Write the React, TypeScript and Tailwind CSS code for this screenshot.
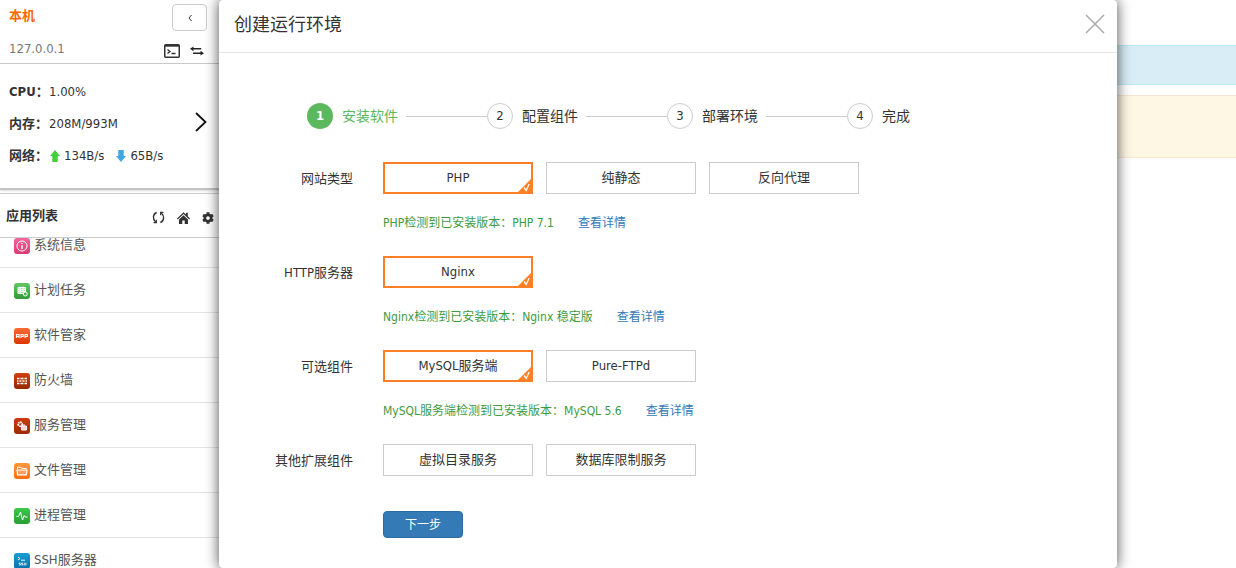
import { useState } from 'react';
import type { ReactNode } from 'react';
import { FaCog } from 'react-icons/fa';

const steps = ['安装软件', '配置组件', '部署环境', '完成'];

const groups = [
  { label: '网站类型', options: ['PHP', '纯静态', '反向代理'], hint: 'PHP检测到已安装版本：PHP 7.1' },
  { label: 'HTTP服务器', options: ['Nginx'], hint: 'Nginx检测到已安装版本：Nginx 稳定版' },
  { label: '可选组件', options: ['MySQL服务端', 'Pure-FTPd'], hint: 'MySQL服务端检测到已安装版本：MySQL 5.6' },
  { label: '其他扩展组件', options: ['虚拟目录服务', '数据库限制服务'], hint: '' },
];

const apps: { name: string; color: string; glyph: ReactNode }[] = [
  {
    name: '系统信息',
    color: 'from-[#f5679b] to-[#d63a72]',
    glyph: (
      <>
        <circle cx="8" cy="8" r="5" />
        <path d="M8 5v1M8 7.2v3.8" strokeWidth="1.4" />
      </>
    ),
  },
  {
    name: '计划任务',
    color: 'from-[#60c763] to-[#2f9c35]',
    glyph: (
      <>
        <path d="M4 4.5h7.5v6H4z" fill="#fff" fillOpacity=".5" />
        <path d="M4 6.5h7.5M4 8.5h7.5M6 3.5v7M9 3.5v5" />
        <circle cx="11.3" cy="11" r="2" fill="#4bb04f" />
      </>
    ),
  },
  {
    name: '软件管家',
    color: 'from-[#ff6a33] to-[#dd3500]',
    glyph: (
      <path
        d="M2.5 10V6.5H5V10M2.5 8.5H5M7 10V6.5h2.2v2H7M11 10V6.5h2.3v2H11"
        strokeWidth="1.1"
      />
    ),
  },
  {
    name: '防火墙',
    color: 'from-[#d33f10] to-[#922a04]',
    glyph: <path d="M3 5.5h2.5M6.5 5.5h3M10.5 5.5H13M3 8h1.5M5.5 8h2M8.5 8h2M11.5 8H13M3 10.5h2.5M6.5 10.5h3M10.5 10.5H13" strokeWidth="1.6" />,
  },
  {
    name: '服务管理',
    color: 'from-[#cf3a10] to-[#9c2b05]',
    glyph: (
      <>
        <circle cx="6.2" cy="6.2" r="2" strokeWidth="1.8" strokeDasharray="1.6 .5" />
        <path d="M7.5 8h5v4h-5zM9 8v4M11 8v4M9 7h2" fill="#fff" fillOpacity=".6" />
      </>
    ),
  },
  {
    name: '文件管理',
    color: 'from-[#ff9838] to-[#ff6c0c]',
    glyph: (
      <>
        <path d="M3.5 6.5V4.2h3.2l1 1.2h4.6v1.1" />
        <path d="M3 7h10l-.6 4.8H3.6z" fill="#fff" fillOpacity=".25" strokeWidth="1.2" />
      </>
    ),
  },
  {
    name: '进程管理',
    color: 'from-[#3cc94a] to-[#2a9f33]',
    glyph: <path d="M2.5 8.5h2L6.5 4l2 8 1.7-4.5 1 1.5h2.3" />,
  },
  {
    name: 'SSH服务器',
    color: 'from-[#12a0d4] to-[#0872aa]',
    glyph: (
      <>
        <path d="M4 4l2 1.5L4 7M7 7.2h4" />
        <path d="M6.5 10H5v1h1.5v1H5M9 10H7.5v1H9v1H7.5M10.3 9.7v2.8M10.3 11h1.7M12 9.7v2.8" strokeWidth=".7" />
      </>
    ),
  },
];

function TerminalIcon() {
  return (
    <svg viewBox="0 0 16 14" className="w-4 h-3.5" fill="none" stroke="#333">
      <rect x=".75" y=".75" width="14.5" height="12.5" rx="1" strokeWidth="1.5" />
      <path d="M1 1.7h14" strokeWidth="2" />
      <path d="M3.5 5.5L6 7.5 3.5 9.5M7.5 9.5h4" strokeWidth="1.4" />
    </svg>
  );
}

function TransferIcon() {
  return (
    <svg viewBox="0 0 14 10" className="w-3.5 h-2.5" fill="#222">
      <path d="M3.5.5L0 2.8l3.5 2.4V3.6h7.7V2H3.5zM10.5 4.8L14 7.2l-3.5 2.3V8H3V6.4h7.5z" />
    </svg>
  );
}

function RefreshIcon() {
  return (
    <svg viewBox="0 0 13 13" className="w-[13px] h-[13px]" fill="none" stroke="#333" strokeWidth="1.4">
      <path d="M4.6 1.5C.8 3 .3 8 3.6 11M8.4 11.5c3.8-1.5 4.3-6.5 1-9.5" />
      <path d="M1.6 11.6h2.8V8.8M11.4 1.4H8.6v2.8" strokeWidth="1.1" />
    </svg>
  );
}

function HomeIcon() {
  return (
    <svg viewBox="0 0 13 12" className="w-[13px] h-3" fill="#333">
      <path d="M6.5.2L9 2.6V.8h1.8v3.5L13 6.5l-.8.9-5.7-5.3L.8 7.4 0 6.5z" />
      <path d="M6.5 3.3L11 7.5V12H7.7V8.5H5.3V12H2V7.5z" />
    </svg>
  );
}

function TrafficArrow({ down = false }: { down?: boolean }) {
  return (
    <svg viewBox="0 0 10 12" className={`w-2.5 h-3 ${down ? 'rotate-180' : ''}`} fill={down ? '#41a7e4' : '#41d23b'}>
      <path d="M5 0l5 6H7.7v6H2.3V6H0z" />
    </svg>
  );
}

function Sidebar() {
  return (
    <aside className="w-[224px] shrink-0 h-full flex flex-col overflow-hidden">
      <div className="h-16 shrink-0 border-b border-[#ccc] flex flex-col pl-[9px] pr-[17px] pt-1">
        <div className="flex items-start justify-between">
          <strong className="text-[#ff6600] leading-6">本机</strong>
          <button
            type="button"
            aria-label="收起"
            className="w-[35px] h-[27px] rounded border border-[#ccc] flex items-center justify-center cursor-pointer"
          >
            <svg viewBox="0 0 4 8" className="w-1 h-2" fill="none" stroke="#333" strokeWidth="1">
              <path d="M3.5 1L1 4l2.5 3" />
            </svg>
          </button>
        </div>
        <div className="flex items-center justify-between pt-2">
          <span className="text-[#777] leading-5">127.0.0.1</span>
          <span className="flex items-center gap-2.5 pr-[3px] pt-1">
            <button type="button" aria-label="终端" className="cursor-pointer"><TerminalIcon /></button>
            <button type="button" aria-label="切换" className="cursor-pointer"><TransferIcon /></button>
          </span>
        </div>
      </div>

      <div className="h-[126px] shrink-0 border-b-2 border-[#c4c4c4] shadow-sm flex items-start justify-between pt-3 pl-[9px] pr-[17px]">
        <dl className="grid grid-cols-[40px_auto] leading-8">
          <dt className="font-bold">CPU：</dt>
          <dd>1.00%</dd>
          <dt className="font-bold">内存：</dt>
          <dd>208M/993M</dd>
          <dt className="font-bold">网络：</dt>
          <dd className="flex items-center gap-1 pl-px">
            <TrafficArrow />
            <span className="mr-2">134B/s</span>
            <TrafficArrow down />
            <span>65B/s</span>
          </dd>
        </dl>
        <button type="button" aria-label="展开" className="mt-9 cursor-pointer">
          <svg viewBox="0 0 12 20" className="w-3 h-5" fill="none" stroke="#111" strokeWidth="1.8">
            <path d="M1 1l9.5 9L1 19" />
          </svg>
        </button>
      </div>

      <div className="mt-[3px] h-[45px] shrink-0 border-y border-[#ccc] flex items-center justify-between pl-1.5 pr-[10px]">
        <h2 className="font-bold">应用列表</h2>
        <div className="flex items-center gap-3 pt-1">
          <button type="button" aria-label="刷新" className="cursor-pointer"><RefreshIcon /></button>
          <button type="button" aria-label="首页" className="cursor-pointer"><HomeIcon /></button>
          <button type="button" aria-label="设置" className="cursor-pointer"><FaCog size={12} /></button>
        </div>
      </div>

      <div className="flex-1 overflow-hidden">
        <ul className="-mt-[15px]">
          {apps.map((app) => (
            <li key={app.name} className="h-[45px] border-b border-[#e4e4e4]">
              <a href="#" className="h-full flex items-center gap-1 pl-3.5 text-[#555]">
                <span className={`size-4 mt-0.5 rounded-[3px] bg-linear-to-b ${app.color}`}>
                  <svg viewBox="0 0 16 16" className="size-4" fill="none" stroke="#fff">
                    {app.glyph}
                  </svg>
                </span>
                {app.name}
              </a>
            </li>
          ))}
        </ul>
      </div>
    </aside>
  );
}

function Option({ name, active, onClick }: { name: string; active: boolean; onClick: () => void }) {
  return (
    <button
      type="button"
      aria-pressed={active}
      onClick={onClick}
      className={`relative w-[150px] h-8 flex items-center justify-center cursor-pointer ${
        active ? 'border-2 border-[#ff7f27]' : 'border border-[#ccc]'
      }`}
    >
      {name}
      {active && (
        <svg viewBox="0 0 13 13" className="absolute right-0 bottom-0 size-[13px]" fill="none">
          <path d="M13 0v13H0z" fill="#ff7f27" />
          <path d="M6 8.5l2.2 3L11.2 5" stroke="#fff" strokeWidth="1.3" />
        </svg>
      )}
    </button>
  );
}

export default function App() {
  const [selected, setSelected] = useState(['PHP', 'Nginx', 'MySQL服务端']);

  const toggle = (name: string) =>
    setSelected((prev) => (prev.includes(name) ? prev.filter((n) => n !== name) : [...prev, name]));

  return (
    <div className="relative flex h-screen overflow-hidden bg-white text-[13px] text-[#333] font-['DejaVu_Sans_Condensed','Noto_Sans','Noto_Sans_CJK_SC',sans-serif]">
      <Sidebar />

      <main className="flex-1 pt-[45px] flex flex-col gap-2.5">
        <div className="h-10 bg-[#d9edf7] border-y border-[#bce8f1]" />
        <div className="h-[63px] bg-[#fdf7e3] border-y border-[#f5e8cf]" />
      </main>

      {/* Environment dialog */}
      <div
        role="dialog"
        aria-labelledby="dialog-title"
        className="absolute inset-y-0 left-[219px] right-[119px] bg-white rounded shadow-[0_0_14px_rgba(0,0,0,0.7)]"
      >
        <header className="h-[53px] border-b border-[#e5e5e5] flex items-center justify-between pl-[15px] pr-3 pb-1">
          <h1 id="dialog-title" className="text-lg pt-0.5">创建运行环境</h1>
          <button type="button" aria-label="关闭" className="cursor-pointer">
            <svg viewBox="0 0 20 20" className="size-5" fill="none" stroke="#aaa" strokeWidth="1.5">
              <path d="M1 1l18 18M19 1L1 19" />
            </svg>
          </button>
        </header>

        <ol className="flex pl-[88px] pt-[50px] text-sm">
          {steps.map((step, i) => (
            <li key={step} className="w-[180px] flex items-center">
              <span
                className={`size-[26px] mr-[9px] rounded-full flex items-center justify-center text-[13px] ${
                  i === 0 ? 'bg-[#5cb85c] text-white font-bold' : 'border border-[#ccc]'
                }`}
              >
                {i + 1}
              </span>
              <span className={i === 0 ? 'text-[#5cb85c]' : ''}>{step}</span>
              {i < steps.length - 1 && <span className="flex-1 ml-2 h-px bg-[#ccc]" />}
            </li>
          ))}
        </ol>

        <form className="pt-[33px]" onSubmit={(e) => e.preventDefault()}>
          {groups.map((group) => (
            <fieldset key={group.label} aria-label={group.label} className="flex gap-[30px]">
              <span className="w-[134px] text-right leading-[34px]">{group.label}</span>
              <div>
                <div className="flex gap-[13px]">
                  {group.options.map((name) => (
                    <Option key={name} name={name} active={selected.includes(name)} onClick={() => toggle(name)} />
                  ))}
                </div>
                {group.hint && (
                  <p className="h-[62px] pt-[19px] leading-5 text-xs text-[#3f9a3f]">
                    {group.hint}
                    <a href="#" className="ml-6 text-[#337ab7]">查看详情</a>
                  </p>
                )}
              </div>
            </fieldset>
          ))}
          <button
            type="submit"
            className="mt-[33px] ml-[164px] w-20 h-[27px] rounded border border-[#2e6da4] bg-[#337ab7] text-xs text-white cursor-pointer"
          >
            下一步
          </button>
        </form>
      </div>
    </div>
  );
}
